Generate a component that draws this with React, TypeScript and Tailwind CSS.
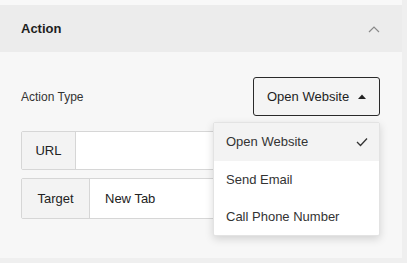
import React from "react";

export default function App() {
  return (
    <div className="w-[407px] h-[263px] bg-[#efefef] overflow-hidden font-['Liberation_Sans',Arial,sans-serif] text-[#1f1f1f]">
      <div className="w-[402px]">
        <div className="h-[5px] bg-[#f8f8f8]" />
        <div className="h-[47px] bg-[#ececec] flex items-center justify-between pl-[21px] pr-[22px]">
          <span className="text-[13px] font-bold text-[#1e1e1e]">Action</span>
          <svg width="12" height="8" viewBox="0 0 12 8" fill="none">
            <path d="M1 7L6 2L11 7" stroke="#8a8a8a" strokeWidth="1.2" />
          </svg>
        </div>
        <div className="h-[206px] bg-[#f7f7f7] pl-[21px] pr-[22px] pt-[25px]">
          <div className="flex items-center justify-between">
            <span className="text-[12px] text-[#333]">Action Type</span>
            <div className="relative">
              <button className="h-[39px] w-[127px] border border-[#2a2a2a] rounded-[3px] bg-[#f4f4f4] flex items-center justify-between pl-[13px] pr-[13px] text-[13px] text-[#1e1e1e]">
                <span>Open Website</span>
                <svg width="8" height="5" viewBox="0 0 8 5">
                  <path d="M0 5L4 0.5L8 5Z" fill="#222" />
                </svg>
              </button>
              <div className="absolute right-0 top-[45px] w-[167px] bg-white rounded-[2px] border border-[#e3e3e3] shadow-[0_3px_8px_rgba(0,0,0,0.15)] z-10 text-[13px] text-[#333]">
                <div className="h-[38px] bg-[#f3f3f3] flex items-center justify-between pl-[12px] pr-[11px]">
                  <span>Open Website</span>
                  <svg width="12" height="10" viewBox="0 0 12 10" fill="none">
                    <path d="M1 5L4.5 8.5L11 1.5" stroke="#333" strokeWidth="1.3" />
                  </svg>
                </div>
                <div className="h-[38px] flex items-center pl-[12px]">Send Email</div>
                <div className="h-[36px] flex items-center pl-[12px]">Call Phone Number</div>
              </div>
            </div>
          </div>
          <div className="mt-[15px] flex h-[39px] border border-[#d6d6d6] rounded-[2px] bg-white text-[13px]">
            <div className="w-[54px] bg-[#f3f3f3] border-r border-[#d6d6d6] flex items-center justify-center text-[#222]">URL</div>
            <div className="flex-1" />
          </div>
          <div className="mt-[8px] flex h-[41px] border border-[#d6d6d6] rounded-[2px] bg-white text-[13px]">
            <div className="w-[68px] bg-[#f3f3f3] border-r border-[#d6d6d6] flex items-center justify-center text-[#222]">Target</div>
            <div className="flex-1 flex items-center pl-[15px] text-[#222]">New Tab</div>
          </div>
        </div>
      </div>
    </div>
  );
}
